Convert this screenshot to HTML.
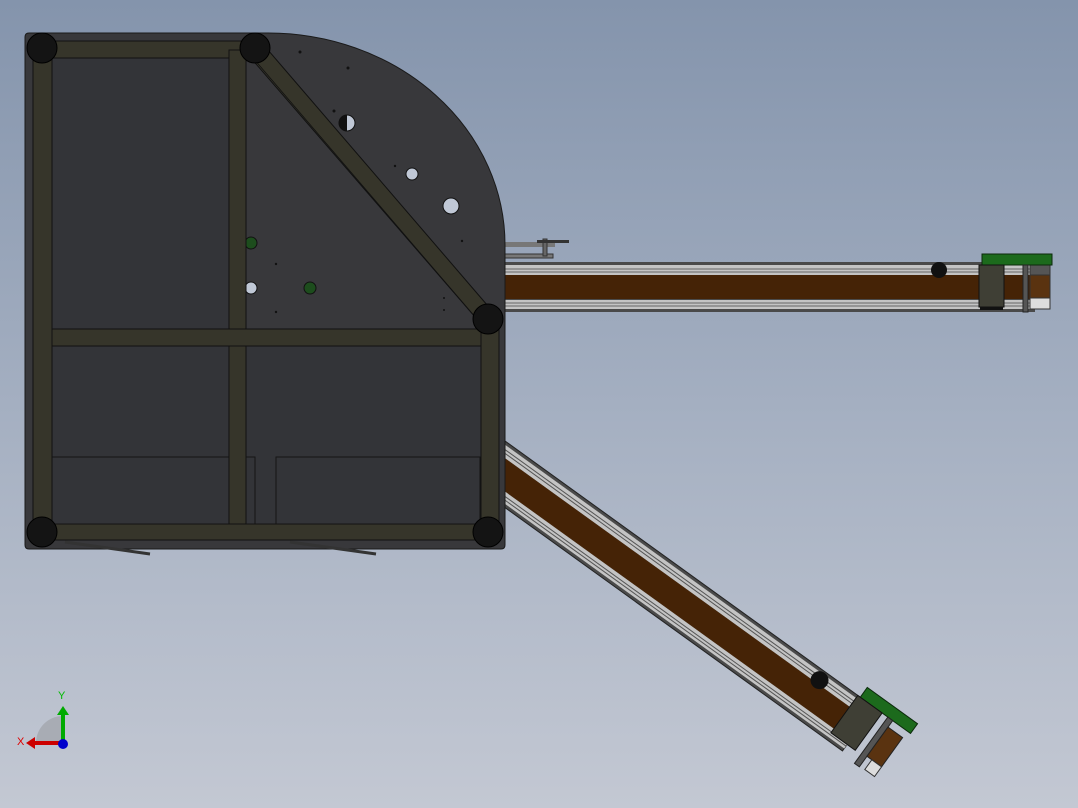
<!DOCTYPE html>
<html><head><style>
html,body{margin:0;padding:0;width:1078px;height:808px}
body{overflow:hidden;background:linear-gradient(#8494ac 0%,#a4afc1 50%,#c3c8d3 100%);font-family:"Liberation Sans",sans-serif}
svg{display:block}
</style></head><body>
<svg width="1078" height="808" viewBox="0 0 1078 808" xmlns="http://www.w3.org/2000/svg">
<g transform="translate(505,441) rotate(35.8)">
  <rect x="-60" y="0" width="515" height="54" fill="#4a4a4a" stroke="#222" stroke-width="1"/>
  <rect x="-60" y="3" width="515" height="11" fill="#c4c4c4"/>
  <line x1="-60" y1="7" x2="455" y2="7" stroke="#555"/>
  <line x1="-60" y1="10" x2="455" y2="10" stroke="#555"/>
  <rect x="-60" y="14" width="515" height="27" fill="#452306"/>
  <rect x="-60" y="41" width="515" height="10" fill="#c4c4c4"/>
  <line x1="-60" y1="45" x2="455" y2="45" stroke="#555"/>
  <line x1="-60" y1="48" x2="455" y2="48" stroke="#555"/>
  <circle cx="395" cy="10" r="9" fill="#111"/>
  <rect x="438" y="-12" width="62" height="12" fill="#1c6a1c" stroke="#0b2a0b"/>
  <rect x="435" y="0" width="30" height="46" fill="#3f3f35" stroke="#111"/>
  <rect x="472" y="0" width="6" height="57" fill="#555" stroke="#222"/>
  <rect x="478" y="8" width="18" height="36" fill="#5a3310" stroke="#222"/>
  <rect x="484" y="44" width="12" height="12" fill="#ddd" stroke="#333"/>
</g>
<rect x="505" y="262" width="530" height="50" fill="#4a4a4a"/>
<rect x="505" y="265" width="525" height="10" fill="#c4c4c4"/>
<line x1="505" y1="269" x2="1030" y2="269" stroke="#666"/>
<line x1="505" y1="272" x2="1030" y2="272" stroke="#666"/>
<rect x="505" y="275" width="525" height="24" fill="#452306"/>
<rect x="505" y="300" width="525" height="9" fill="#c4c4c4"/>
<line x1="505" y1="303" x2="1030" y2="303" stroke="#666"/>
<line x1="505" y1="306" x2="1030" y2="306" stroke="#666"/>
<rect x="1030" y="265" width="20" height="44" fill="#5a3310" stroke="#333"/>
<rect x="1030" y="298" width="20" height="11" fill="#ddd" stroke="#333"/>
<rect x="1030" y="265" width="20" height="10" fill="#555" stroke="#333"/>
<rect x="982" y="254" width="70" height="11" fill="#1c6a1c" stroke="#0b2a0b"/>
<rect x="979" y="265" width="25" height="42" fill="#3f3f35" stroke="#111"/>
<rect x="980" y="307" width="23" height="3" fill="#111"/>
<rect x="1023" y="265" width="5" height="47" fill="#555" stroke="#222"/>
<circle cx="939" cy="270" r="8" fill="#111"/>
<rect x="505" y="242" width="50" height="5" fill="#777"/>
<rect x="505" y="254" width="48" height="4" fill="#777" stroke="#333"/>
<rect x="543" y="239" width="4" height="17" fill="#666" stroke="#333"/>
<rect x="537" y="240" width="32" height="3" fill="#333"/>
<path d="M25,37 Q25,33 29,33 H268 A237,212 0 0 1 505,245 V545 Q505,549 501,549 H29 Q25,549 25,545 Z" fill="#38383b" stroke="#1a1a1a" stroke-width="1"/>
<rect x="52" y="58" width="177" height="271" fill="#333438"/>
<rect x="52" y="346" width="429" height="177" fill="#333438"/>
<rect x="52" y="457" width="203" height="67" fill="none" stroke="#151515"/>
<rect x="276" y="457" width="204" height="67" fill="none" stroke="#151515"/>
<circle cx="347" cy="123" r="8" fill="#c0c8d6" stroke="#111"/>
<path d="M347,115 A8,8 0 0 0 347,131 Z" fill="#111"/>
<circle cx="412" cy="174" r="6" fill="#c0c8d6" stroke="#111"/>
<circle cx="451" cy="206" r="8" fill="#c0c8d6" stroke="#111"/>
<circle cx="251" cy="243" r="6" fill="#1d4d1d" stroke="#111"/>
<circle cx="251" cy="288" r="6" fill="#c0c8d6" stroke="#111"/>
<circle cx="310" cy="288" r="6" fill="#1d4d1d" stroke="#111"/>
<g fill="#111"><circle cx="300" cy="52" r="1.5"/><circle cx="348" cy="68" r="1.5"/><circle cx="334" cy="111" r="1.5"/><circle cx="395" cy="166" r="1.2"/><circle cx="462" cy="241" r="1.2"/><circle cx="276" cy="264" r="1.2"/><circle cx="276" cy="312" r="1.2"/><circle cx="444" cy="298" r="1"/><circle cx="444" cy="310" r="1"/></g>
<g fill="#36352a" stroke="#111" stroke-width="1">
<rect x="33" y="41" width="19" height="491"/>
<rect x="42" y="41" width="213" height="17"/>
<rect x="229" y="50" width="17" height="474"/>
<rect x="52" y="329" width="429" height="17"/>
<rect x="481" y="320" width="18" height="212"/>
<rect x="42" y="524" width="446" height="16"/>
<polygon points="250,57 262,43 494,313 482,325"/>
</g>
<line x1="253" y1="58" x2="482" y2="325" stroke="#111" stroke-width="0.8"/>
<g fill="#141414" stroke="#000"><circle cx="42" cy="48" r="15"/><circle cx="255" cy="48" r="15"/><circle cx="488" cy="319" r="15"/><circle cx="42" cy="532" r="15"/><circle cx="488" cy="532" r="15"/></g>
<g stroke="#333" stroke-width="3"><line x1="65" y1="542" x2="150" y2="554"/><line x1="290" y1="542" x2="376" y2="554"/></g>
<path d="M36,743 A27,27 0 0 1 63,716 V743 Z" fill="#a8acb4"/>
<line x1="63" y1="743" x2="33" y2="743" stroke="#c00" stroke-width="4"/>
<polygon points="26,743 35,737 35,749" fill="#c00"/>
<line x1="63" y1="743" x2="63" y2="714" stroke="#0a0" stroke-width="4"/>
<polygon points="63,706 57,715 69,715" fill="#0a0"/>
<circle cx="63" cy="744" r="5" fill="#00c"/>
<text x="17" y="745" font-size="11" fill="#d00">X</text>
<text x="58" y="699" font-size="11" fill="#0b0">Y</text>
</svg>
</body></html>
